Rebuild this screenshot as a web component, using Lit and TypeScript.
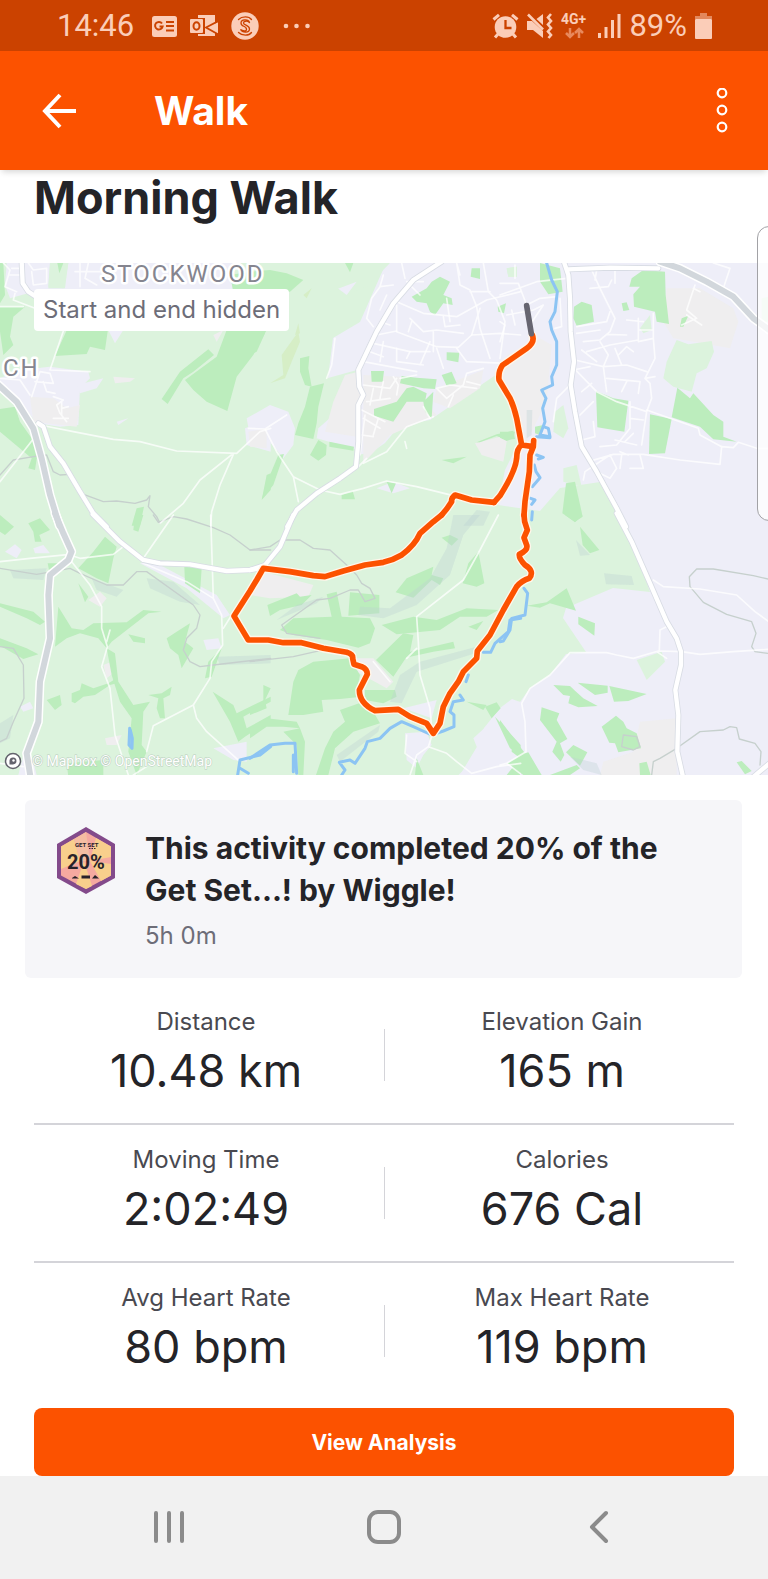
import { LitElement, html, svg, css } from "lit";
import { customElement } from "lit/decorators.js";

type TileName = "nw" | "n" | "ne" | "sw" | "s" | "se";
type Shape = [TileName, string];

// Map geometry is stored per tile, three units to one map pixel.
const TILES: Record<TileName, [number, number]> = {
  nw: [0, 255],
  n: [250, 255],
  ne: [500, 255],
  sw: [0, 515],
  s: [250, 515],
  se: [500, 515],
};

const GREENLAND =
  "M0 263H386L360 322L333 338L328 378L357 370L358 455L372 452L385 443L400 425L430 420L500 372L510 400L520 440L505 470L498 505L540 511L560 488L600 482L627 525L650 592L613 588L566 608L563 618L586 652L566 654L550 675L530 688L520 702L512 699L500 708L484 728L478 745L460 775H0Z";

const TOWN: Shape[] = [
  ["nw", "M20 24L70 24L150 24L145 95L190 100L205 24H480L490 110H100L30 130L15 90Z"],
  ["nw", "M480 24H700L690 60L700 110H480Z"],
  ["nw", "M0 370L60 345L150 335L265 350L270 370L240 400L235 510L180 515L110 505L60 440L0 390Z"],
  ["nw", "M735 520L790 500L812 470V590L740 570Z"],
  ["n", "M-10 490L60 450L115 470L135 520L130 570L100 610L50 550L0 545Z"],
  ["n", "M245 50L280 24L330 60L320 95L290 120L250 90Z"],
  ["n", "M205 520L250 480L325 550V585L200 550Z"],
  ["n", "M380 700L430 680L480 700L430 715Z"],
  ["nw", "M230 390L310 370L290 400L240 415Z"],
  ["nw", "M325 225L370 225L345 265Z"],
  ["nw", "M350 500L385 490L355 510Z"],
  ["sw", "M15 110L45 88L65 105L50 130Z"],
  ["sw", "M55 780L75 700L100 740L110 780ZM60 575L90 560L100 580L70 590Z"],
  ["sw", "M100 100L130 90L150 115H105Z"],
  ["sw", "M435 140L480 150L650 240L690 300L670 310L560 220L420 145Z"],
  ["sw", "M610 375L655 370L665 400L620 405Z"],
  ["sw", "M640 700L690 690L740 680L740 740L700 735Z"],
  ["s", "M465 655L530 650L545 690L520 720L500 760L470 735Z"],
  ["s", "M670 670L790 560H812V785H620L690 720Z"],
  ["s", "M460 580L560 555L545 610Z"],
];

const BUILT: Shape[] = [
  ["nw", "M90 425L160 430L200 460L240 450L230 515L100 500Z"],
  ["nw", "M340 365L405 370L390 380L345 385Z"],
  ["nw", "M745 530L800 520V580L750 575Z"],
  ["n", "M285 360L325 350L335 400L320 545L225 530L250 440Z"],
  ["n", "M340 360L450 365L560 480L420 540L340 625Z"],
  ["n", "M560 400L700 345L690 400L600 460L550 440Z"],
  ["n", "M770 300L812 285V420L790 440L755 380Z"],
  ["n", "M675 565L790 535L770 560L760 620L695 600Z"],
  ["ne", "M10 330L120 250L155 270L140 440L80 560L50 470L0 380Z"],
  ["ne", "M500 100L600 100L700 160L715 200L690 280L520 250L490 200Z"],
  ["s", "M40 170L190 210L175 245L60 250L0 240Z"],
  ["s", "M320 430L370 430L430 500L410 520L320 470Z"],
  ["se", "M420 620L530 610V780H300L310 740L400 710Z"],
  ["sw", "M265 255L300 230L320 250L300 275Z"],
  ["sw", "M310 450L335 440L345 470L320 490Z"],
  ["sw", "M315 670L365 660L350 690H320Z"],
  ["nw", "M640 240L670 225L650 260Z"],
];

const PARK: Shape[] = [
  ["n", "M240 24L420 24L350 95L290 120L320 80L240 110Z"],
  ["ne", "M165 470L190 450L205 520L190 550L160 530Z"],
  ["ne", "M190 640L230 630L245 695L190 680Z"],
  ["ne", "M20 40L50 35L50 65L25 65Z"],
  ["ne", "M420 220L450 180L455 225L430 235Z"],
  ["ne", "M785 130L804 125V200H785Z"],
  ["ne", "M500 320L530 255L565 268L635 258L642 290L620 340L590 355L575 410L520 395L490 370Z"],
  ["se", "M410 435L485 410L495 440L440 495Z"],
  ["n", "M770 40L800 35V65L775 65Z"],
  ["nw", "M150 24H205L195 100H145Z"],
];

const WOOD: Shape[] = [
  ["nw", "M0 24L10 24L15 120L0 145ZM0 155L75 155L40 185L30 245L40 270L10 300L0 230Z"],
  ["nw", "M205 215L325 215L315 285L270 275L260 297L165 303Z"],
  ["nw", "M680 225H800L760 300L710 365L682 468L620 440L580 405L555 375L650 305Z"],
  ["nw", "M485 432L540 350L625 283L642 300L580 350L550 370L503 447Z"],
  ["nw", "M0 462L45 455L60 500L95 550L115 580L105 645L85 640L95 610L0 530Z"],
  ["nw", "M800 660L812 655V705L785 735Z"],
  ["nw", "M410 760L432 755L420 812H395Z"],
  ["nw", "M172 24H190L178 55Z"],
  ["nw", "M690 60L750 50L812 60V110H700Z"],
  ["n", "M0 50L60 45L110 55L160 75L120 110H0Z"],
  ["n", "M0 235L45 235L20 290L0 300Z"],
  ["n", "M485 125L530 100L545 80L570 65L600 80L580 120L605 130L608 150L580 145L555 180L540 170L530 145L500 140Z"],
  ["n", "M665 40L690 40L690 72L662 65ZM743 155L768 145L762 175L745 170Z"],
  ["n", "M590 292L628 293L625 322L590 315ZM363 348L402 348L398 380H365ZM575 360L605 350L620 385L590 393Z"],
  ["n", "M455 363L500 368L560 373L555 402L520 400L450 385Z"],
  ["n", "M372 462L440 440L470 400L490 395L530 415L525 440L470 440L430 500L372 482ZM520 440L550 410L545 490L525 470Z"],
  ["n", "M150 310L178 303L175 340L185 395L165 390L150 350Z"],
  ["n", "M180 395L222 385L205 455L200 505L190 552L135 540L145 505L165 455Z"],
  ["n", "M205 555L230 570L228 600L205 617L180 600ZM238 560L312 575L310 587L238 575Z"],
  ["n", "M85 600L102 597L70 690L35 733L60 660Z"],
  ["n", "M410 680L438 685L425 715ZM275 720L308 708L315 733H275Z"],
  ["n", "M680 562L740 538L790 527L795 552L770 555L740 543L690 562Z"],
  ["n", "M575 615L650 605L610 625Z"],
  ["n", "M285 24H310L300 52Z"],
  ["ne", "M120 24L180 40L188 110L145 118L120 80Z"],
  ["ne", "M395 70L430 45L495 50L497 120L507 207L470 200L465 170L402 155L400 118L420 95L388 95Z"],
  ["ne", "M222 155L245 140L275 150L282 200L230 212L220 190ZM365 145L380 142L388 165L370 168Z"],
  ["ne", "M545 190L565 182L550 215H540Z"],
  ["ne", "M288 408L340 430L385 437L373 530L292 517Z"],
  ["ne", "M450 478L515 492L495 595L447 597Z"],
  ["ne", "M532 398L570 430L580 415L640 480L670 500V545L710 560L640 553L600 515L515 487Z"],
  ["ne", "M0 530L45 530L40 550L20 558L0 548ZM105 515L130 510L120 540L105 535Z"],
  ["ne", "M198 685L225 680L248 785L225 800L187 775Z"],
  ["sw", "M0 0L42 35L15 60L0 50ZM85 25L120 10L150 45L118 60L125 80L105 80L100 50Z"],
  ["sw", "M315 65L350 95L340 130L325 205L290 190L235 160L280 110Z"],
  ["sw", "M405 0H430L415 50L400 45ZM553 155L605 160L600 235L555 205Z"],
  ["sw", "M143 145L200 145L150 180ZM235 205L265 245L255 262Z"],
  ["sw", "M0 265L100 290L135 320L120 330L80 310L0 275ZM0 370L80 400L115 418L70 432L0 392Z"],
  ["sw", "M175 275L215 340L250 345L280 325L380 322L430 285L485 290L445 295L335 380L320 400L295 370L240 355L200 370L165 395Z"],
  ["sw", "M385 358L435 370L435 385L400 380ZM500 370L530 350L570 325L555 380L580 400L545 460L535 420L510 400Z"],
  ["sw", "M320 400L345 415L355 500L400 570L450 560L430 590L425 690L440 710L410 780L385 710L395 610L360 560L335 480Z"],
  ["sw", "M215 535L240 525L245 505L280 520L325 505L350 490L350 505L330 510L285 540L250 545L225 565L215 560ZM140 555L180 540L185 570L165 585Z"],
  ["sw", "M445 540L485 535L515 515L510 540L490 550L495 610L480 610L470 580L475 550Z"],
  ["sw", "M638 530L700 570L710 595L812 545V560L730 605L740 640L812 600V615L735 665L715 680L690 620Z"],
  ["sw", "M615 490L625 440L665 400L635 485ZM200 745L310 735V785H205Z"],
  ["s", "M575 68L600 60L625 72L605 92ZM685 110L703 205L680 215L638 205L655 145Z"],
  ["s", "M437 232L470 190L550 155L545 180L580 190L570 210L545 195L490 248Z"],
  ["s", "M52 270L140 235L150 245L185 240L155 270L90 285L60 303Z"],
  ["s", "M230 238L260 230L275 305L360 310L375 340L360 385L325 398L230 375L130 360L90 345L130 310L245 305ZM300 232L388 240V295L295 302Z"],
  ["s", "M395 330L490 305L560 315L650 280L745 285L710 305L630 305L570 345L440 358ZM655 335L700 318L680 345Z"],
  ["s", "M378 435L460 355L490 360L480 410L430 485ZM440 420L610 380L615 400L550 410L460 430Z"],
  ["s", "M145 465L190 440L300 430L330 480L322 520L335 545L270 552L215 555L220 590L160 600L115 600L130 500ZM345 525L435 525L440 545L400 565L345 555Z"],
  ["s", "M270 585L340 560L370 590L390 625L310 650L255 700L235 780H198L225 700L250 650L285 620Z"],
  ["s", "M0 640L50 610L140 620L150 640L100 635L50 635L0 670ZM100 650L150 640L165 680L160 780H145L140 690ZM40 510L62 520L45 555L50 580L0 600V585L40 570Z"],
  ["s", "M705 575L740 562L752 580L725 610ZM735 605L812 690V720L780 700ZM500 730L520 780H495ZM810 730V780H770Z"],
  ["s", "M650 560L710 570L700 585Z"],
  ["se", "M195 0H248L225 22ZM240 35L298 105L270 115L248 90Z"],
  ["se", "M80 272L140 262L200 220L228 287L150 265L120 278Z"],
  ["se", "M235 305L285 325L283 362L235 328Z"],
  ["se", "M160 510L210 513L225 527L250 550L293 573L235 577L205 565L210 543L190 540ZM233 503L323 512V533L285 540ZM328 513L440 537L385 558L342 560Z"],
  ["se", "M125 577L178 595L170 615L202 672L180 685L193 720L182 740L157 710L170 680L120 615Z"],
  ["se", "M305 635L348 602L370 620L380 640L410 655L423 700L355 712L345 685L328 683ZM220 690L262 712L240 752L198 712Z"],
  ["se", "M0 615L75 715L85 712L125 780H70L22 745L55 725L35 710V680L0 630ZM150 780L230 750L240 760L210 780Z"],
  ["se", "M418 745L440 740L452 780H420ZM710 742L725 738L755 768L735 778Z"],
];

const HILL: Shape[] = [
  ["n", "M640 812L680 765L720 770L700 812Z"],
  ["s", "M610 0H690L640 60L600 180L500 270L400 310L325 300L330 275L420 280L540 190L590 100Z"],
  ["s", "M420 560L450 480L510 440L680 395L690 410L500 470L455 565ZM80 315L140 270L220 245L200 265Z"],
  ["sw", "M440 190L520 200L600 270L540 260L450 220ZM650 425L812 420V445L660 450ZM30 165L140 160L130 195L40 190Z"],
  ["sw", "M0 625L40 600L30 670L0 685ZM275 190L370 225L350 245L290 225Z"],
  ["se", "M312 175L395 183L402 210L318 208ZM228 75L270 120L240 122ZM210 725L290 745L305 780L250 765Z"],
  ["ne", "M80 465L97 465L95 540L80 550Z"],
  ["s", "M260 720L390 630L385 650L270 740Z"],
];

const MEADOW: Shape[] = [
  ["n", "M60 385L100 360L95 300L145 230L150 260L125 320L105 370Z"],
  ["n", "M135 240L145 205L150 235ZM160 120L185 100L170 130Z"],
];

const CONTOUR: Shape[] = [
  ["nw", "M0 660L40 615L100 605L140 600L160 650L180 660L210 658M255 720L310 740L350 738L405 745L440 735L450 722L445 755L470 785L480 805"],
  ["sw", "M460 0L475 22L520 5L560 12L640 38L690 60L750 105L812 105M0 160L110 178L210 160L240 175L320 210L370 210L410 170L440 170L580 270L600 300L590 340L560 370L550 405L570 440L600 455L640 450L812 430"],
  ["sw", "M0 395L40 400L70 450L72 550L40 620L20 670L0 680"],
  ["s", "M0 105L60 95L90 75L150 75L190 100L240 105L290 150L320 180L335 205L360 220L375 250L345 260L325 225L300 225L240 250L200 255L95 330L110 355L210 370M0 440L130 425L240 400"],
  ["se", "M804 192L760 182L640 162L590 162L568 185L570 215L610 262L680 298L755 320L768 355L755 395L765 410L804 415M455 780L460 740L480 730L530 700L600 650L670 645L690 635L710 638L718 672L765 685L783 710L780 750"],
  ["se", "M370 660L410 665L420 695L400 705L365 695Z"],
];

const WATER: Shape[] = [
  ["ne", "M140 24L155 75L172 110L165 170L150 200L155 225L170 260V330L155 365L158 390L125 405L138 430L128 460L135 500L120 540L150 545L145 520L130 515M110 545L150 548"],
  ["ne", "M110 600L130 607L115 612M103 630L108 650L120 668L97 695M92 730L105 735L95 748M97 770L95 795"],
  ["se", "M72 220L83 235L75 300L35 310L30 345L10 378L0 380"],
  ["s", "M812 310L780 315L775 350L735 385L722 412L700 412M655 480L648 500M630 540L640 555L610 560L600 590L612 600L612 635L580 648L545 660L490 635L455 620L420 640L390 670L352 680L345 700L315 745L300 735L268 742L285 765L275 780"],
  ["s", "M0 730L60 690L105 685L135 685L140 775M130 720V770"],
  ["sw", "M812 695L780 720L720 735L713 780M720 760L745 775M389 640L387 690L396 700L397 670L391 645"],
];

const LANE: Shape[] = [
  ["nw", "M10 24L30 45L15 95L50 110M30 60H65M35 40H60M85 24L100 45L140 40V85L100 90L95 50M45 115L40 135L105 160M240 24V95M265 24L255 70L290 90M225 50H300"],
  ["nw", "M190 228L150 345L270 350M0 155L70 155M105 380L160 385L150 355L120 350L95 425M130 380L140 410L165 415M160 425L190 435L170 450L180 475L200 500M185 440V480M205 455L185 460M160 490H205"],
  ["nw", "M120 510L220 530L340 553L420 560L530 588L710 595L780 530L812 520M700 595L600 675L550 745L480 805M700 598L660 690L635 770L632 812M105 545L0 680M0 370L60 375L90 420"],
  ["n", "M-5 520L45 522L110 480M45 522L80 590L130 665L210 705L270 718L340 700L410 678L500 695L610 722M130 665L145 740"],
  ["n", "M340 625L410 590L470 515L550 485M350 610L325 635M255 250L245 330L230 370"],
  ["n", "M470 80L520 80M480 90L510 120M455 24L465 70M430 90L390 95L365 130L350 190L370 215M400 60L390 95M410 120L390 165M440 140L520 175L620 185L710 135L812 110M440 150V230L560 275L625 277L665 240L750 235L812 240"],
  ["n", "M620 24L630 90L660 105L680 155L690 220L720 310M630 60L620 24M700 24L715 110L740 135L765 200L750 310M720 110L660 110M480 190L520 230L560 225L640 235M485 200L475 230M550 230V290M580 185L585 215L630 210M590 130L600 200M665 240L690 160M380 240L440 228M370 265L480 290L540 290M340 320L500 350M390 200L420 210"],
  ["n", "M360 290L400 305M400 260L390 320M440 280V320L520 330M480 290L470 310M540 260L510 330M560 280L580 340M620 280L650 320L770 325L790 300M700 340L650 355L640 390L590 430L560 400L600 390L680 400M610 420L595 455M650 380L690 390M340 390L420 400L440 370M350 440L420 430M430 365L445 390L440 420M370 400L360 450M400 380L390 430M500 360L450 370"],
  ["n", "M335 465L405 500M340 490L390 520M335 540L370 545M345 480L330 600M385 490L370 540"],
  ["n", "M520 455L540 490M465 560L470 580"],
  ["ne", "M0 120L110 80L200 70M0 85H55L80 150L120 130L170 125M45 70V30M0 200L15 210L0 260M20 180L100 165L130 150L90 210M35 165L45 210M180 130L185 215L165 220"],
  ["ne", "M275 45L300 100L345 190L330 230L300 255L250 260M270 100L325 95L335 75M345 40V85M290 45L285 75M330 170L320 200L230 215M230 235L300 225M320 238L380 240"],
  ["ne", "M415 190V255L330 270L260 290M460 175V250L415 260M380 195L430 200M415 225H460M460 250L465 310L435 370L450 385L455 430L440 470L350 440L290 410L222 340M225 315L310 335L380 330L440 350M310 335L320 410M345 280L365 330M300 260L325 300L310 335M355 300L380 275L400 290M245 285L290 320M220 345L270 335M245 410L275 385M320 370L420 380M365 410L380 380M420 380L415 415M435 370L465 365M390 440V520L350 570L300 575M440 470L425 570M390 490L430 495M375 560L400 535M345 555L410 570"],
  ["ne", "M210 390L170 430L160 500M240 480L280 440M245 555L285 545L280 500M265 620L340 598H430L540 615L660 628L665 575L600 540L595 520L440 465M250 675L255 650L330 600L350 640L330 670L290 650M365 600L360 640M390 640H430M420 600L430 640M665 575L700 578L715 562L770 580H804M360 590L385 600"],
  ["ne", "M530 25L550 45M640 24L690 40L670 100M585 90L560 165L590 190L545 210M580 100L600 110M560 180L605 210"],
  ["sw", "M0 140L90 130L210 118M210 120L240 130L340 118L370 95L400 110M215 140L270 210L305 275V340L322 395L305 455L330 520L345 660L385 780M430 130L520 0M632 0L640 250M430 145L560 200L640 250L665 300L668 390L635 440L630 490L580 570L590 610L620 650L720 740M580 570L460 632L440 710M670 340L695 300M0 745L70 755M400 780L440 755M330 345L320 380"],
  ["s", "M745 0L690 105L640 195L500 305L505 380L510 480L540 580L545 640M548 655L535 695L500 720L480 780M535 695L590 715L620 740L665 775L740 755L812 745M470 660L465 715L500 740M500 400L470 430M370 440L420 500"],
  ["se", "M460 195L490 215L600 222L710 240L765 290L804 318M510 330L480 345L478 405M804 403L700 410L600 418L545 410L475 408L400 430L350 420L320 413L210 413L150 480L90 520L65 565L75 620L78 710L20 745L0 750M470 410L500 430M20 745L60 775"],
];

const ROAD: Shape[] = [
  ["nw", "M65 20L68 85L85 110L108 125M115 505L130 515L150 575L190 625L240 710L280 775L320 815"],
  ["n", "M575 20L490 75L430 145L380 230L325 345L328 395L340 420L325 450L325 560L318 635L270 670L200 715L140 765L112 815"],
  ["s", "M130 0L90 95L45 150L0 165"],
  ["sw", "M278 -2L360 80L430 135L480 145L570 148L680 168L750 165L780 160"],
  ["ne", "M190 15L205 60L210 130L212 230L222 320L212 390L225 470L245 575L290 650L350 760L378 815M205 43L330 38L475 40"],
  ["se", "M350 -5L395 80L450 205L500 320L530 370L543 410V450L526 525L535 600L532 710L550 790M755 790L812 742"],
];

const TRUNK: Shape[] = [
  ["nw", "M-10 385L50 440L100 520L125 610L150 720L178 812"],
  ["sw", "M165 -5L190 55L215 110L205 135L150 180L145 240L150 370L120 500L115 620L80 715L92 790"],
  ["ne", "M480 20L540 40L620 80L700 125L760 190L812 228"],
];

const ROUTE: Shape[] = [
  ["ne", "M97 240Q106 262 80 280L30 315L8 330Q-6 350 -3 375L30 430Q42 455 50 490L65 570L100 575L101 557L100 575L90 600L88 650L75 740L72 780M65 570Q50 580 50 610Q46 650 0 722L-18 742"],
  ["n", "M732 742L665 735L615 720Q603 730 605 740L590 762L575 780"],
  ["s", "M575 0L550 20L510 55Q495 90 455 120Q430 135 400 142L345 150L280 168L225 185L190 182L120 170L40 160L20 195L0 228L-48 303L-35 325L-5 375L55 375L100 383L155 383L220 400L290 412Q310 418 308 430L312 448L335 455Q352 462 352 478L328 525Q328 565 375 587L445 583L480 605L530 625L550 655L570 625L580 575L600 535L625 500L640 470L680 430L682 408L720 360L760 285L800 215Q815 197 838 190Q855 168 825 150Q806 130 808 118Q835 105 830 90L822 68L832 45L824 20L822 0"],
];

const draw = (kind: string, shapes: Shape[]) =>
  shapes.map(
    ([tile, d]) => svg`<path class=${kind} transform="translate(${TILES[tile].join(" ")}) scale(.33333)" d=${d} />`,
  );

@customElement("route-map")
class RouteMap extends LitElement {
  static styles = css`
    :host { display: block; position: relative; }
    .canvas { display: block; width: 100%; height: auto; overflow: visible; background: #eeeef8; }
    path { fill: none; stroke-linejoin: round; stroke-linecap: round; }
    .land, .park { fill: #dcf3dd; }
    .town { fill: #eeeef8; }
    .built { fill: #efeeef; }
    .wood { fill: #bcedbd; }
    .hill { fill: #bccfd4; fill-opacity: .34; }
    .meadow { fill: #d6eec6; }
    .contour { stroke: #c6d0cd; stroke-width: 4; }
    .water { stroke: #8cc4f3; stroke-width: 9; }
    .lane { stroke: #fff; stroke-opacity: .75; stroke-width: 5; }
    .road-edge { stroke: #d8dce4; stroke-width: 18; }
    .road { stroke: #fff; stroke-width: 13; }
    .trunk-edge { stroke: #fff; stroke-width: 27; }
    .trunk { stroke: #d2d7dc; stroke-width: 18; }
    .halo { stroke: #fff6ea; stroke-width: 25; }
    .route { stroke: #fc5200; stroke-width: 17; }
    .hidden { stroke: #666570; stroke-width: 17; }
    .place { font: 400 24px Roboto, sans-serif; letter-spacing: 2px; fill: #85858f; stroke: #fff; stroke-width: 5px; stroke-linejoin: round; paint-order: stroke; }
    .credit { font: 400 14px Roboto, sans-serif; fill: #fff; stroke: #b9cdbd; stroke-width: 1px; paint-order: stroke; }
    .mark { fill: #fff; stroke: #63636d; stroke-width: 1.5; }
    .mark-core { fill: #63636d; }
    .note { position: absolute; left: 34px; top: 26px; padding: 0 9px; border-radius: 4px; background: #fff; color: #6d6d78; font: 400 24px/42px Inter, sans-serif; }
  `;

  render() {
    return html`
      <svg class="canvas" viewBox="0 263 768 512" role="img" aria-label="Route of the walk">
        <clipPath id="frame"><rect x="0" y="263" width="768" height="512" /></clipPath>
        <g clip-path="url(#frame)">
          <path class="land" d=${GREENLAND} />
          ${draw("town", TOWN)} ${draw("built", BUILT)} ${draw("park", PARK)} ${draw("meadow", MEADOW)}
          ${draw("wood", WOOD)} ${draw("hill", HILL)} ${draw("contour", CONTOUR)}
          ${draw("lane", LANE)} ${draw("water", WATER)}
          ${draw("road-edge", ROAD)} ${draw("road", ROAD)}
          ${draw("trunk-edge", TRUNK)} ${draw("trunk", TRUNK)}
          ${draw("halo", ROUTE)} ${draw("route", ROUTE)}
          ${draw("hidden", [["ne", "M80 152L88 200L94 236"]])}
        </g>
        <text class="place" x="101" y="282">STOCKWOOD</text>
        <text class="place" x="3" y="376">CH</text>
        <circle class="mark" cx="13" cy="761" r="7.5" />
        <path class="mark-core" d="M9.500 764.500V760.500A3.500 3.500 0 1 1 13 764.500Z" />
        <circle cx="13.500" cy="760.500" r="1.200" fill="#fff" />
        <text class="credit" x="32" y="766">© Mapbox © OpenStreetMap</text>
      </svg>
      <span class="note">Start and end hidden</span>
    `;
  }
}

@customElement("status-bar")
class StatusBar extends LitElement {
  static styles = css`
    :host { display: flex; align-items: center; justify-content: space-between; height: 51px; padding: 0 56px 0 57px; background: #cb4200; color: #fbcdb8; font: 400 31px/51px Roboto, sans-serif; }
    .side { display: flex; align-items: center; }
    .left { gap: 13px; }
    .time { margin-right: 5px; }
    .more { margin-left: 11px; }
    .right { gap: 8px; }
    svg { display: block; fill: currentColor; }
    .cut { fill: #cb4200; }
    .line { fill: none; stroke: #cb4200; }
    .ink { fill: none; stroke: currentColor; }
    .net { font: 700 14px Roboto, sans-serif; }
    .faint { fill: none; stroke: #e8895c; stroke-width: 2.500; }
  `;

  render() {
    return html`
      <div class="side left">
        <span class="time">14:46</span>
        <svg width="25" height="22" viewBox="0 0 25 22"><rect width="25" height="21" y="1" rx="2.500" /><path class="line" stroke-width="2" d="M10 8.500A3.800 3.800 0 1 0 10.600 11.500H7.500M14 7h8M14 11h8M14 15.500h8" /></svg>
        <svg width="28" height="24" viewBox="0 0 28 24"><path d="M8 1h17v8.500L28 8v12l-3-1.500V22H8Z" /><path class="line" stroke-width="1.800" d="M28.500 7L16 13.500L28.500 20.500" /><path class="cut" d="M15 4H6v16h9Z" /><rect y="5" width="13" height="14" rx="1" /><ellipse class="line" stroke-width="2" cx="6.500" cy="12" rx="3" ry="3.800" /></svg>
        <svg width="28" height="28" viewBox="0 0 28 28"><circle cx="14" cy="14" r="13.700" /><g class="line" stroke-width="1.300" stroke-linecap="round"><path d="M7.500 7.500C11 4 18 4 20.500 7.500M18.500 10.500C17.500 7 10 7 10 11C10 15.500 15.500 13 15.500 17.500M18.500 10.500C16 8.500 12.500 9 12.500 11C12.500 13.500 18.500 13 18.500 17C18.500 21 11.500 21 9.500 17.500C11.500 19 15.500 19.500 15.500 17.500M7.500 20.500C11 24 18 24 20.500 20.500" /></g></svg>
        <svg class="more" width="28" height="6" viewBox="0 0 28 6"><circle cx="3" cy="3" r="2.300" /><circle cx="13.500" cy="3" r="2.300" /><circle cx="24.500" cy="3" r="2.300" /></svg>
      </div>
      <div class="side right">
        <svg width="27" height="26" viewBox="0 0 27 26"><circle cx="13.500" cy="14" r="10.800" /><path class="ink" stroke-width="3" d="M1.500 6.500L7 1.800M20 1.800L25.500 6.500M6.500 20.500L3 24.500M20.500 20.500L24 24.500" /><path class="line" stroke-width="2.300" d="M13.500 7v8h6" /></svg>
        <svg width="26" height="26" viewBox="0 0 26 26"><path d="M0 8h5l11 10v7L6 17H0ZM9.500 6L16 1v11Z" /><path class="ink" stroke-width="2.600" d="M1 1.500L16 16.500M24 1L21 4.500L24 8L21 11.500L24 15L21 18.500L24 22L21.500 25" /></svg>
        <svg width="27" height="28" viewBox="0 0 27 28"><text class="net" x="0" y="12">4G+</text><path class="faint" d="M9 16v9M5 21l4 4l4-4M18 26v-9M14 21l4-4l4 4" /></svg>
        <svg width="25" height="26" viewBox="0 0 25 26"><path d="M2 20h3v5H2ZM8.500 14h3v11h-3ZM15 7h3v18h-3ZM21.500 1h3v24h-3Z" /></svg>
        <span>89%</span>
        <svg width="17" height="26" viewBox="0 0 17 26"><path opacity=".5" d="M5 0h7v3h5v3H0V3h5Z" /><rect y="6" width="17" height="20" rx="1" /></svg>
      </div>
    `;
  }
}

const STATS = [
  [["Distance", "10.48 km"], ["Elevation Gain", "165 m"]],
  [["Moving Time", "2:02:49"], ["Calories", "676 Cal"]],
  [["Avg Heart Rate", "80 bpm"], ["Max Heart Rate", "119 bpm"]],
];

@customElement("app-root")
class AppRoot extends LitElement {
  static styles = css`
    :host { display: flex; flex-direction: column; position: relative; min-height: 100vh; overflow: hidden; background: #fff; color: #242428; font-family: Inter, sans-serif; }
    h1, h2, h3, p, dl, dd, dt { margin: 0; font-weight: 400; }
    button { border: 0; padding: 0; background: none; cursor: pointer; font-family: inherit; }
    svg { display: block; }
    .bar { display: flex; align-items: center; height: 119px; padding: 0 24px 0 42px; background: #fc5200; color: #fff; box-shadow: 0 4px 6px -2px rgba(0, 0, 0, .16); z-index: 1; }
    .bar h1 { flex: 1; margin-left: 76px; font: 700 39px/48px Inter, sans-serif; }
    .menu { width: 44px; display: grid; place-items: center; }
    .title { padding: 0 34px; height: 93px; font: 700 45px/56px Inter, sans-serif; }
    .card { display: grid; grid-template-columns: 60px 1fr; gap: 29px; margin: 25px 26px 0 25px; padding: 27px 36px 26px 31px; border-radius: 6px; background: #f6f6f9; }
    .card h3 { font: 700 30px/42px Inter, sans-serif; }
    .card p { margin-top: 9px; color: #6d6d78; font-size: 24px; line-height: 32px; }
    .badge-name { font: 700 6px Roboto, sans-serif; fill: #28222a; }
    .badge-value { font: 700 20px Roboto, sans-serif; fill: #28222a; }
    .stats { padding: 9px 34px 7px; }
    .row { display: grid; grid-template-columns: 1fr 12px 1fr; align-items: center; border-bottom: 2px solid #d4d4d9; }
    .row:last-child { border-bottom-color: transparent; }
    .stat { padding: 16px 0 22px; text-align: center; }
    .stat dt { color: #494950; font-size: 24px; line-height: 38px; }
    .stat dd { font-size: 45px; line-height: 60px; }
    .rule { justify-self: center; width: 1px; height: 52px; background: #d4d4d9; }
    .primary { height: 68px; margin: 0 34px; border-radius: 8px; background: #fc5200; color: #fff; font-size: 21px; font-weight: 700; }
    .nav { flex: 1; display: grid; grid-template-columns: repeat(3, 1fr); min-height: 100px; padding: 0 61px 2px; background: #f1f1f1; }
    .nav button { display: grid; place-items: center; }
    .nav path, .nav rect { fill: none; stroke: #8b8b8b; stroke-width: 4; stroke-linecap: round; stroke-linejoin: round; }
    .edge { position: absolute; right: -21px; top: 226px; width: 30px; height: 293px; border: 1px solid #a2a2a6; border-radius: 12px; background: rgba(255, 255, 255, .75); z-index: 2; }
  `;

  render() {
    return html`
      <status-bar></status-bar>
      <header class="bar">
        <button aria-label="Back">
          <svg width="36" height="36" viewBox="0 0 36 36" fill="none" stroke="#fff" stroke-width="4"><path d="M18 2L3 18L18 34M2 18H34" /></svg>
        </button>
        <h1>Walk</h1>
        <button class="menu" aria-label="More options">
          <svg width="12" height="46" viewBox="0 0 12 46" fill="none" stroke="#fff" stroke-width="2.200"><circle cx="6" cy="5" r="4.300" /><circle cx="6" cy="22" r="4.300" /><circle cx="6" cy="39" r="4.300" /></svg>
        </button>
      </header>
      <h2 class="title">Morning Walk</h2>
      <route-map></route-map>
      <section class="card">
        <svg width="60" height="68" viewBox="0 0 60 68">
          <path fill="#834a8b" d="M30 0L59 17V51L30 67L1 51V17Z" />
          <path fill="#f5a9a0" d="M30 5L55 19.500V48.500L30 62L5 48.500V19.500Z" />
          <path fill="#f8cf8c" d="M5 19.500L18 12L24 34L5 42ZM40 11L55 19.500V30L34 34ZM20 57L28 34L36 59L30 62ZM55 37V48.500L45 54L34 34Z" />
          <path fill="#f5bda2" d="M18 12L30 5L34 34L24 34Z" />
          <text class="badge-name" x="19" y="20">GET SET</text>
          <path stroke="#28222a" stroke-width="1.200" stroke-dasharray="1.500 1" d="M33 21.500h7" />
          <text class="badge-value" x="11" y="42">20%</text>
          <path fill="#28222a" d="M16 51L19 49L23 51.500H16ZM25.500 48.500H34V51.500H25.500ZM36 51.500L39 48L43 51.500Z" />
        </svg>
        <div>
          <h3>This activity completed 20% of the Get Set...! by Wiggle!</h3>
          <p>5h 0m</p>
        </div>
      </section>
      <section class="stats">
        ${STATS.map(
          ([a, b]) => html`<div class="row">
            <dl class="stat"><dt>${a[0]}</dt><dd>${a[1]}</dd></dl>
            <span class="rule"></span>
            <dl class="stat"><dt>${b[0]}</dt><dd>${b[1]}</dd></dl>
          </div>`,
        )}
      </section>
      <button class="primary">View Analysis</button>
      <nav class="nav" aria-label="System">
        <button aria-label="Recent apps"><svg width="34" height="34" viewBox="0 0 34 34"><path d="M4 3V31M17 3V31M30 3V31" /></svg></button>
        <button aria-label="Home"><svg width="36" height="36" viewBox="0 0 36 36"><rect x="3" y="3" width="30" height="30" rx="9" /></svg></button>
        <button aria-label="Go back"><svg width="20" height="34" viewBox="0 0 20 34"><path d="M17 3L3 17L17 31" /></svg></button>
      </nav>
      <div class="edge"></div>
    `;
  }
}
